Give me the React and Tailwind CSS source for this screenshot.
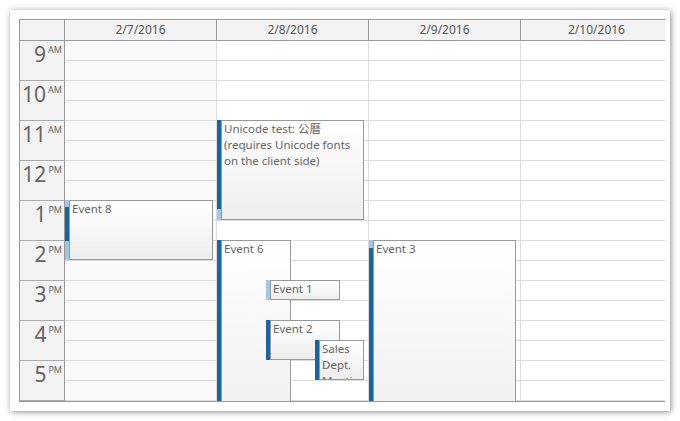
const HOURS = [
  ['9', 'AM'], ['10', 'AM'], ['11', 'AM'], ['12', 'PM'], ['1', 'PM'],
  ['2', 'PM'], ['3', 'PM'], ['4', 'PM'], ['5', 'PM'],
];
const DAYS = ['2/7/2016', '2/8/2016', '2/9/2016', '2/10/2016'];

// positions are px inside the day column; dark = [top, height] of the duration bar
const EVENTS = [
  { day: 0, left: 0, top: 159, width: 148, height: 60, lines: ['Event 8'], dark: [7, 34] },
  { day: 1, left: 0, top: 79, width: 147, height: 100, lines: ['Unicode test: 公曆', '(requires Unicode fonts', 'on the client side)'], dark: [0, 89] },
  { day: 1, left: 0, top: 199, width: 74, height: 200, lines: ['Event 6'], dark: [0, 200] },
  { day: 1, left: 49, top: 239, width: 74, height: 20, lines: ['Event 1'], dark: null },
  { day: 1, left: 49, top: 279, width: 74, height: 40, lines: ['Event 2'], dark: [0, 40] },
  { day: 1, left: 98, top: 299, width: 49, height: 40, lines: ['Sales', 'Dept.', 'Meeting'], dark: [0, 40] },
  { day: 2, left: 0, top: 199, width: 147, height: 200, lines: ['Event 3'], dark: [8, 192] },
];

const font = { fontFamily: '"Noto Sans", "Noto Sans CJK SC", sans-serif' };

function CalEvent({ ev }) {
  return (
    <div
      className="absolute flex"
      style={{ left: ev.left, top: ev.top, width: ev.width, height: ev.height }}
    >
      <div className="relative w-[4px] shrink-0 bg-[#9dc8ec]">
        {ev.dark && (
          <div
            className="absolute left-0 w-full bg-[#1566a8]"
            style={{ top: ev.dark[0], height: ev.dark[1] }}
          />
        )}
      </div>
      <div className="flex-1 min-w-0 overflow-hidden border border-[#999999] bg-linear-to-b from-white to-[#eeeeee] px-[2px] text-[11.5px] leading-[16px] text-[#666666]">
        {ev.lines.map((l) => (
          <div key={l} className="whitespace-nowrap">{l}</div>
        ))}
      </div>
    </div>
  );
}

export default function App() {
  return (
    <div className="w-[680px] h-[421px] bg-white overflow-hidden" style={font}>
      <div className="ml-[10px] mt-[10px] w-[660px] h-[401px] bg-white pt-[9px] pl-[9px] shadow-[1px_1px_6px_rgba(0,0,0,0.45)]">
        <div className="w-[646px] overflow-hidden border-l border-t border-b border-[#999999]">
          {/* header */}
          <div className="flex h-[21px] w-max border-b border-[#999999] bg-[#f3f3f3]">
            <div className="w-[45px] shrink-0 border-r border-[#999999]" />
            {DAYS.map((d) => (
              <div
                key={d}
                className="w-[152px] shrink-0 border-r border-[#999999] text-center text-[12px] leading-[20px] text-[#555555]"
              >
                {d}
              </div>
            ))}
          </div>

          {/* body */}
          <div className="flex h-[360px] w-max overflow-hidden">
            <div className="w-[45px] shrink-0 border-r border-[#999999] bg-[#f3f3f3]">
              {HOURS.map(([h, ap]) => (
                <div key={h} className="flex h-[40px] justify-end border-b border-[#aaaaaa] pr-[2px] text-[#666666]">
                  <span className="text-[21px] leading-[26px]">{h}</span>
                  <span className="ml-[2px] pt-[3px] text-[9px] leading-[12px]">{ap}</span>
                </div>
              ))}
            </div>
            {DAYS.map((d, i) => (
              <div
                key={d}
                className={`relative w-[152px] shrink-0 border-r border-[#dddddd] ${i === 0 ? 'bg-[#f9f9f9]' : 'bg-white'}`}
              >
                {Array.from({ length: 18 }).map((_, k) => (
                  <div key={k} className="h-[20px] border-b border-[#dddddd]" />
                ))}
                {EVENTS.filter((e) => e.day === i).map((ev, k) => (
                  <CalEvent key={k} ev={ev} />
                ))}
              </div>
            ))}
          </div>
        </div>
      </div>
    </div>
  );
}
